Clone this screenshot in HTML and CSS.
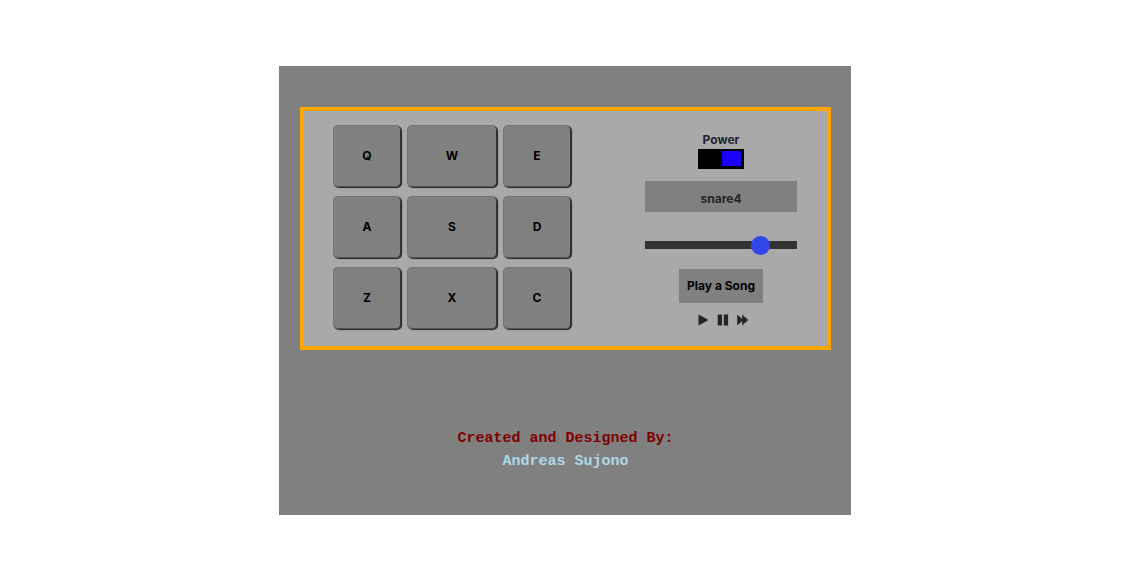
FILE: index.html
```html
<!DOCTYPE html>
<html lang="en">
<head>
<meta charset="utf-8">
<meta name="viewport" content="width=device-width, initial-scale=1">
<title>Drum Machine</title>
<link rel="stylesheet" href="styles.css">
</head>
<body>
<main class="stage">
  <section class="machine">
    <div class="pads">
      <button class="pad" type="button">Q</button>
      <button class="pad" type="button">W</button>
      <button class="pad" type="button">E</button>
      <button class="pad" type="button">A</button>
      <button class="pad" type="button">S</button>
      <button class="pad" type="button">D</button>
      <button class="pad" type="button">Z</button>
      <button class="pad" type="button">X</button>
      <button class="pad" type="button">C</button>
    </div>
    <div class="controls">
      <label class="power-label" for="power">Power</label>
      <input class="power" id="power" type="checkbox" role="switch" checked>
      <output class="display">snare4</output>
      <input class="volume" type="range" min="0" max="100" value="80" aria-label="Volume">
      <button class="song" type="button">Play a Song</button>
      <div class="transport">
        <button class="icon" type="button" aria-label="Play"><svg viewBox="0 0 12 12"><path d="M1.5.5 11.5 6l-10 5.5z"/></svg></button>
        <button class="icon" type="button" aria-label="Pause"><svg viewBox="0 0 12 12"><path d="M.7.5h4.3v11H.7zM6.8 .5h4.3v11H6.8z"/></svg></button>
        <button class="icon" type="button" aria-label="Next"><svg viewBox="0 0 12 12"><path d="M.2.5 5.2 5V.5L11.2 6l-6 5.5V7L.2 11.5z"/></svg></button>
      </div>
    </div>
  </section>
  <footer class="credits">
    <p class="credit-title">Created and Designed By:</p>
    <p class="credit-name">Andreas Sujono</p>
  </footer>
</main>
</body>
</html>
```
FILE: styles.css
```css
* {
  box-sizing: border-box;
}

body {
  margin: 0;
  min-height: 100vh;
  padding: 66px 10px 20px 0;
  background: #fff;
  color: #212529;
  font: bold 12px/18px Inter, "Liberation Sans", sans-serif;
}

button {
  border: 0;
  padding: 0;
  background: gray;
  color: #000;
  font: inherit;
}

.stage {
  width: 100%;
  max-width: 572px;
  margin: 0 auto;
  padding: 41px 20px 42px 21px;
  background: gray;
}

.machine {
  display: flex;
  flex-wrap: wrap;
  justify-content: space-between;
  gap: 20px;
  border: 4px solid orange;
  padding: 14px 30px 17px 29px;
  background: #a9a9a9;
}

.pads {
  display: grid;
  grid-template-columns: 68px 90px 68px;
  grid-auto-rows: 62px;
  gap: 9px 6px;
}

.pad {
  border: 1px solid #747474;
  border-right-color: #333;
  border-bottom-color: #555;
  border-radius: 5px;
  box-shadow: 1px 1px 1px #222;
}

.controls {
  display: flex;
  flex-direction: column;
  align-items: center;
  width: 152px;
  padding-top: 6px;
}

.power {
  appearance: none;
  display: flex;
  justify-content: flex-end;
  width: 46px;
  height: 20px;
  margin: 0 0 12px;
  padding: 2px 3px 3px 2px;
  background: #000;
}

.power::before {
  content: "";
  width: 19px;
  background: #1a00ff;
}

.display {
  width: 100%;
  margin-bottom: 23px;
  padding: 9px 0 4px;
  background: gray;
  text-align: center;
}

.volume {
  appearance: none;
  width: 100%;
  height: 19px;
  margin: 0 0 15px;
  background: transparent;
}

.volume::-webkit-slider-runnable-track {
  height: 8px;
  background: #333;
}

.volume::-webkit-slider-thumb {
  appearance: none;
  width: 19px;
  height: 19px;
  margin-top: -5px;
  border-radius: 50%;
  background: #3246ea;
}

.song {
  padding: 8px;
  margin-bottom: 11px;
}

.transport {
  display: flex;
  gap: 8px;
  padding-left: 4px;
}

.icon {
  display: block;
  width: 12px;
  height: 12px;
  background: none;
}

.icon svg {
  display: block;
  fill: #212529;
}

.credits {
  margin-top: 77px;
  font: bold 15px/23px "Liberation Mono", monospace;
  text-align: center;
}

.credits p {
  margin: 0;
}

.credit-title {
  color: maroon;
}

.credit-name {
  color: lightblue;
}
```
